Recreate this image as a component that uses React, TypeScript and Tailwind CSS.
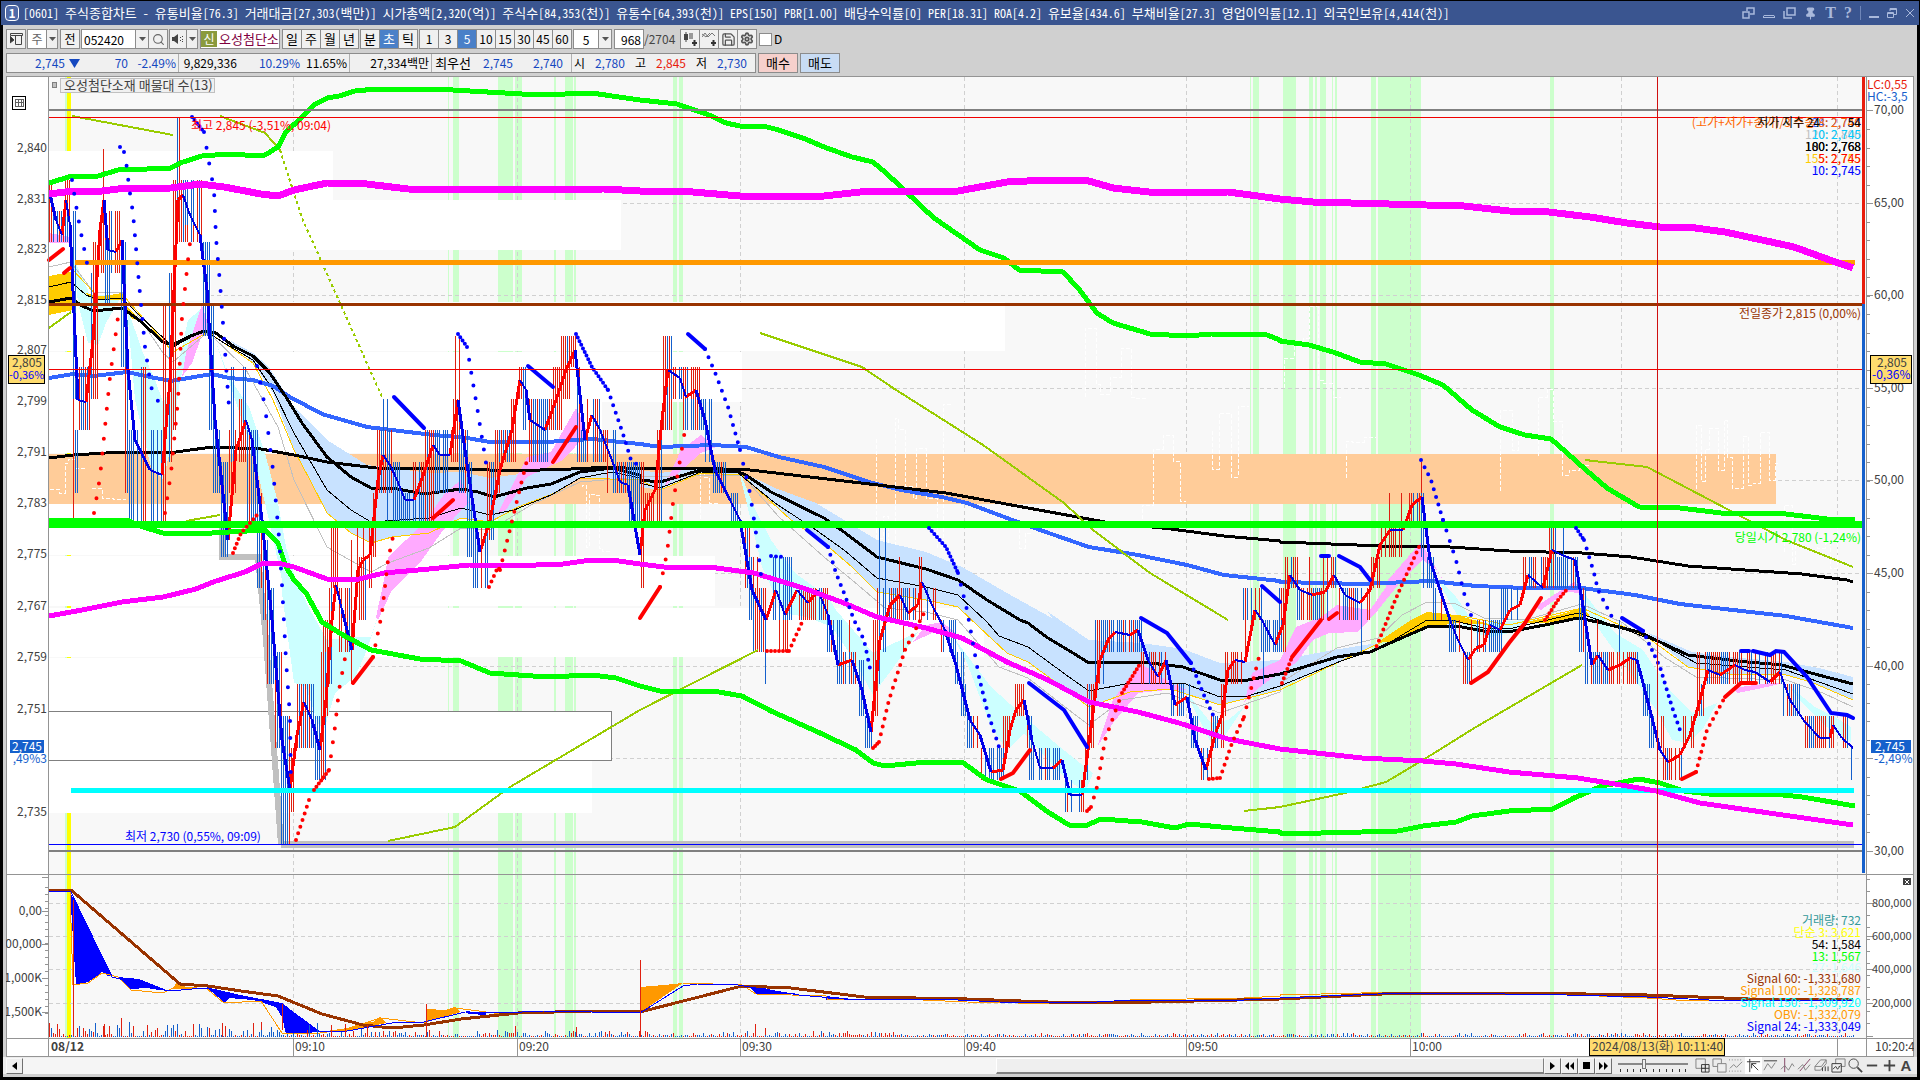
import React from 'react';
import { Search, Save, Settings, Pin } from 'lucide-react';

type Pt = [number, number];

/* Survey tiles of the chart: each letter is a tile origin in chart pixels. */
const ORIGIN: Record<string, Pt> = {
  A: [0, 0], B: [640, 0], C: [1280, 0], D: [0, 220], E: [0, 560], F: [640, 300],
  G: [640, 560], H: [1280, 220], I: [1280, 560], J: [0, 860], K: [640, 860], L: [1280, 860],
};

/* Reads "D 120 475 180 462 ..." (tile letter, then fine-grid pairs) into chart pixels. */
function pts(src: string): string {
  const out: string[] = [];
  let o: Pt = [0, 0];
  let x: number | null = null;
  for (const t of src.split(/\s+/)) {
    if (ORIGIN[t]) { o = ORIGIN[t]; continue; }
    if (x === null) x = Number(t);
    else {
      out.push(Math.round(o[0] + x / 2.45) + ',' + Math.round(o[1] + Number(t) / 3));
      x = null;
    }
  }
  return out.join(' ');
}

const BANDS: Pt[] = [
  [448, 1], [453, 6], [498, 15], [515, 7], [554, 2], [565, 8], [574, 2], [673, 4], [679, 4], [1250, 1], [1253, 6],
  [1283, 13], [1309, 4], [1315, 2], [1320, 6], [1332, 1], [1335, 2], [1371, 5], [1378, 43], [1550, 4],
];
const VGRID = [293, 517, 740, 964, 1186, 1410, 1621, 1837];
const HGRID = [203, 295, 388, 480, 573, 666, 758, 903, 936, 969, 1003];

/* Volume profile rows: top, bottom, right edge. */
const PROFILE: [number, number, number][] = [
  [151, 200, 333], [200, 250, 621], [250, 301, 211], [302, 351, 1005], [352, 402, 742], [402, 453, 602],
  [504, 555, 450], [556, 606, 715], [608, 657, 984], [658, 711, 360], [760, 813, 592],
];

const LIGHT_BLUE = [
  'D 560 360 620 400 660 440 720 560 800 660 900 735 960 745 1050 760 1130 755 1200 775 1290 760 1420 740 1568 745 F 0 510 50 520 150 505 250 515 330 565 430 610 500 660 580 720 700 755 790 800 900 880 1010 955 G 1000 155 1100 240 1230 248 1330 268 1420 308 1568 300 I 0 300 130 270 240 250 150 302 0 385 G 1568 390 1420 435 1300 388 1200 395 1100 440 1050 395 950 305 900 280 F 830 980 780 920 700 900 580 875 520 800 450 730 370 660 250 525 150 520 50 570 0 560 D 1568 780 1420 775 1360 820 1270 860 1200 905 1130 895 1050 940 960 950 910 970 860 940 800 880 760 780 720 690 670 520 620 430',
  'I 900 215 930 235 1010 275 1100 290 1240 305 1320 325 1405 350 1405 420 1300 365 1240 345 1100 343 1000 320 930 250',
];
const CYAN = [
  'D 180 110 220 225 300 225 260 310 240 375 215 370 190 250',
  'D 310 260 350 400 380 480 400 545 425 500 460 300 490 270 440 480 420 680 400 780 370 740 330 540',
  'D 525 350 560 470 610 560 650 700 680 850 700 980 725 1080 E 760 150 800 240 860 230 910 230 930 150 900 270 870 350 820 400 795 510 780 490 750 380 720 370 690 100 D 690 1080 660 900 620 700 570 520',
  'F 240 500 280 620 320 720 380 820 460 890 G 480 150 570 280 680 215 640 290 570 405 520 290 470 200 410 170 350 160 F 300 800 270 650',
  'G 770 235 860 380 950 480 1030 560 1090 620 1110 640 1090 700 1030 640 940 520 900 570 860 500 800 310',
  'G 1340 400 1400 490 1440 480 1480 440 1430 530 1400 550 1350 430',
  'I 390 60 430 110 470 180 500 190 600 180 640 170 570 215 510 235 450 200 400 90',
  'I 745 100 820 220 890 270 960 400 1010 460 1070 430 1040 500 1000 550 960 540 920 450 830 290 760 170',
  'I 1245 375 1310 440 1360 470 1400 500 1400 545 1340 500 1280 430',
];
const PINK = [
  'D 120 40 175 50 175 70 120 70',
  'D 455 400 495 255 520 345 495 345 470 430 445 470',
  'D 950 1010 1040 910 1090 820 1130 780 1150 850 1130 870 1080 940 1035 1020 E 960 90 925 180 920 170 940 60',
  'D 1220 880 1290 710 1350 695 1410 565 1440 640 1380 720 1290 770 1240 870',
  'F 60 560 100 450 150 405 185 440 150 460 110 500',
  'G 670 245 700 195 740 185 790 235 720 215',
  'G 1120 560 1160 420 1225 310 1300 370 1340 390 1290 390 1220 400 1160 490',
  'G 1480 430 1500 340 1568 300 I 40 200 100 170 140 135 220 150 260 80 H 265 1080 345 965 400 1080 I 385 30 350 0 300 60 240 150 190 215 120 220 80 240 40 310 0 335 G 1510 390',
  'I 625 140 720 65 740 80 740 100 700 95 640 150',
  'I 1110 385 1200 370 1235 370 1180 385 1120 400',
];
const GOLD = [
  'D 120 168 175 155 180 270 120 285',
  'D 205 215 240 230 300 220 310 260 350 310 320 295 300 240 230 240',
  'I 240 245 320 180 360 155 430 165 520 195 430 190 360 205 270 245',
  'I 590 190 680 165 740 145 760 165 730 178 650 190',
];

const UPPER_GREEN = 'A 120 549 177 527 240 527 290 510 360 508 420 505 440 490 495 467 560 462 600 466 650 465 680 440 700 395 740 350 770 315 800 295 830 288 870 274 920 266 950 271 1000 267 1090 267 1110 271 1320 285 1450 280 1500 287 1568 299 B 90 313 170 345 210 368 245 378 310 380 330 388 400 415 450 440 520 470 570 485 600 515 640 560 690 620 720 655 833 750 892 774 928 810 1036 816 1073 864 F 1095 0 1120 40 1160 70 1250 103 1340 108 1400 103 1535 105 1568 120 H 0 363 70 375 130 395 195 427 260 431 340 465 400 495 470 570 540 620 600 646 665 658 700 695 750 750 800 805 880 862 980 865 1080 879 1220 880 1340 898 1408 900';
const LOWER_GREEN = 'D 120 900 310 900 350 920 400 940 480 943 560 935 650 930 680 970 700 1040 720 1080 E 750 100 790 185 840 225 910 270 1030 298 1130 303 1200 338 1340 352 1450 345 1510 355 1568 378 G 50 394 180 394 250 408 320 452 440 518 530 570 570 610 600 617 700 606 790 606 850 660 930 693 1000 755 1050 795 1090 797 1130 777 1230 787 1310 805 1345 791 1450 803 1568 815 I 0 818 100 820 200 815 290 812 350 798 430 787 470 768 560 753 670 747 720 715 790 677 880 657 930 668 990 693 1050 702 1210 701 1280 710 1408 739';
const UPPER_MAGENTA = 'A 120 581 180 573 230 576 290 566 420 565 490 552 550 560 640 583 680 587 720 570 800 550 900 553 1000 566 1140 570 1480 568 1568 574 B 100 573 245 589 450 587 560 574 780 574 900 547 1000 541 1090 540 1160 563 1270 579 1440 577 1568 598 C 80 606 450 618 560 633 660 637 760 652 H 850 10 930 22 1000 22 1090 35 1180 60 1260 82 1340 117 1405 143';
const LOWER_MAGENTA = 'E 120 169 200 150 300 125 400 112 480 88 530 63 600 35 640 12 680 8 720 22 800 56 880 57 940 38 1050 27 1150 16 1250 19 1380 12 1430 3 1500 0 1568 12 G 60 22 170 22 280 40 400 85 500 130 580 170 700 205 790 235 900 305 1000 360 1100 425 1220 455 1320 490 1440 538 1568 566 I 200 595 350 602 430 612 560 637 730 653 850 678 920 693 1030 730 1250 768 1405 794';
const BLUE_MA = 'D 120 475 180 462 230 467 310 457 380 475 420 483 520 462 560 475 620 480 670 497 710 530 790 583 900 622 1060 645 1130 650 1200 665 1340 665 1450 658 1568 671 F 50 440 180 435 260 442 340 470 450 500 560 545 640 570 740 590 800 610 900 655 980 690 1100 742 1220 765 1340 795 1430 825 1568 843 I 0 65 200 73 370 62 480 77 600 84 740 84 870 105 980 132 1240 168 1405 204';
const BLACK_LONG = 'D 120 715 180 705 300 695 430 696 520 682 640 686 720 705 800 725 920 745 1150 748 1250 754 1400 748 1500 742 1568 748 F 140 505 270 509 500 543 750 580 950 625 1140 665 1300 687 1430 708 1568 723 H 0 965 250 979 380 977 560 993 740 998 860 1012 1000 1037 1280 1063 1390 1080 I 1405 65';
const BLACK_MID = 'D 120 245 175 234 200 258 230 272 300 264 340 300 400 365 425 375 460 350 500 332 530 340 570 378 620 408 660 455 700 530 740 610 800 710 860 772 910 805 960 805 1040 822 1130 808 1170 815 1210 830 1290 805 1350 793 1420 755 1500 745 1568 765 F 0 540 50 545 90 530 150 510 240 515 260 525 320 575 450 655 500 695 580 770 700 808 780 840 850 900 930 960 G 950 190 1000 235 1060 280 1100 310 1230 305 1330 322 1420 360 1490 360 1568 343 I 0 343 60 320 140 292 220 277 270 250 360 200 430 197 500 212 570 212 650 195 730 175 790 190 880 215 930 245 1000 285 1120 302 1230 315 1300 338 1405 373';
const BLACK_THIN = 'D 120 200 175 185 210 225 240 240 300 235 340 285 425 380 500 330 550 370 620 420 670 510 720 640 800 810 860 870 910 905 1050 895 1130 865 1200 885 1260 870 1350 825 1420 775 1500 755 1568 775 F 0 550 50 565 150 515 240 520 330 610 430 690 500 750 580 835 700 862 780 885 850 965 G 880 228 950 262 1050 350 1100 393 1200 368 1330 370 1420 412 1490 408 1568 378 I 150 302 250 260 360 180 420 180 500 203 570 203 730 160 830 200 930 250 1020 310 1240 330 1320 365 1405 402';
const GOLD_THIN = 'D 180 150 240 230 300 222 425 395 510 335 620 430 670 540 720 690 760 780 800 880 860 940 910 970 960 950 1050 940 1130 895 1200 905 1270 860 1360 820 1420 775 1568 780 F 50 570 150 520 250 525 370 660 450 730 520 800 580 875 700 900 780 920 830 980 G 900 280 950 305 1050 395 1100 440 1200 395 1300 388 1420 435 1568 390 I 150 302 250 245 360 165 430 165 560 195 740 145 900 230 1000 320 1100 343 1240 345 1300 365 1405 420';
const GRAY_THIN = 'D 120 140 175 125 230 220 300 215 400 400 425 425 510 335 600 445 680 620 720 780 800 980 910 1055 950 1030 1050 985 1130 925 1200 930 1300 855 1420 785 1568 770 F 250 525 340 650 450 770 520 840 600 925 G 700 155 780 180 880 320 950 355 1050 450 1100 495 1180 420 1290 400 1420 458 1568 395 I 0 370 140 265 240 235 300 165 360 127 430 132 500 175 600 180 740 133 840 190 940 290 1020 350 1240 360 1330 400 1405 442';

const OLIVE = [
  'A 177 347 425 405', 'A 540 347 650 400 685 450', 'D 120 325 175 275', 'D 455 903 540 885',
  'E 950 843 1115 800 1250 680 1568 450 G 290 270',
  'F 295 100 545 200 620 265 840 435 1040 610 1110 690 1250 820 1440 960',
  'G 1480 752 1568 742 I 160 700 260 665 350 600 480 500 740 315',
  'H 747 720 900 742 1100 870 1240 960 1405 1042',
];

/* Trend dots. The number is the gap between two dots. */
const BLUE_DOTS: [number, string][] = [
  [9, 'A 295 440 303 455'], [14, 'A 303 455 310 505 317 560 325 640 D 340 190 355 380 370 500 390 548'],
  [14, 'A 177 540 187 615 D 195 25 215 145'],
  [4, 'A 470 350 500 395'], [16, 'A 500 395 510 470 525 570 D 530 55 540 190 550 350 560 560'],
  [17, 'D 630 437 650 560 668 750 683 950 E 690 75 700 300 710 470 712 680'],
  [4, 'D 1123 343 1145 380'], [13, 'D 1145 380 1170 580 1190 730'],
  [2, 'D 965 530 1040 625'], [2, 'D 1293 437 1355 500'],
  [4, 'D 1412 343 1450 440 1490 510'], [8, 'D 1490 510 1530 650 1545 720 1568 740'],
  [2, 'F 117 102 160 148'], [9, 'F 160 148 185 225 215 320 245 450'], [14, 'F 245 450 270 580 285 700 300 850'],
  [2, 'F 410 690 460 740'], [8, 'F 460 740 480 820 500 880 525 960 G 550 240 567 340'],
  [5, 'F 320 768 350 770'],
  [4, 'F 708 685 750 740 780 820'], [12, 'F 780 820 800 930 G 830 350'], [8, 'G 830 350 850 450 880 560'],
  [2, 'G 952 368 1040 450 1095 560'],
  [2, 'G 1228 175 1290 220 1350 310'], [7, 'G 1350 310 1380 400 1405 465'],
  [2, 'G 1525 78 1568 125'], [2, 'H 100 1007 120 1007'], [2, 'H 145 1007 195 1040 220 1080'],
  [8, 'H 345 720 370 780 400 900'], [11, 'H 400 900 430 1020 I 450 100 467 165'],
  [4, 'H 725 925 745 960'], [9, 'H 745 960 770 1060 I 780 90 820 190'],
  [2, 'I 838 175 890 212'], [7, 'I 890 212 930 320 960 440 980 510'],
  [2, 'I 1130 272 1150 272'], [2, 'I 1160 272 1200 285 1215 272 1235 275 1290 350 1350 460 1390 465 1405 475'],
];
const RED_DOTS: [number, string][] = [
  [2, 'D 120 120 155 88'], [2, 'D 157 158 172 145'],
  [15, 'D 230 880 245 770 255 650 270 470 290 290'],
  [15, 'D 405 880 420 760 435 540 445 290 460 120 465 70'],
  [5, 'D 570 1000 590 940 630 885'],
  [7, 'E 725 840 760 710'], [4, 'E 770 690 805 630'], [14, 'E 805 630 820 500 830 390 845 295'],
  [2, 'E 865 370 915 290'], [12, 'E 915 290 935 160 950 0 D 965 935'],
  [2, 'D 1060 895 1110 840'], [6, 'E 1197 82 1220 20 D 1225 1050'], [10, 'D 1225 1050 1260 880 1290 720'],
  [2, 'D 1355 725 1410 620'],
  [2, 'F 0 955 50 860'], [14, 'F 50 860 65 760 80 610 110 390'],
  [4, 'G 310 272 365 272'], [6, 'G 365 272 400 180'],
  [3, 'G 570 563 585 545'], [8, 'G 585 545 610 420 650 270 695 160'],
  [2, 'G 885 657 915 640 955 570'],
  [3, 'G 1095 753 1105 740'], [10, 'G 1105 740 1120 680 1140 540 1180 400'], [4, 'G 1180 400 1225 312'],
  [4, 'G 1395 657 1420 655'], [7, 'G 1420 655 1450 550 1480 470'], [10, 'G 1480 470 1520 280'],
  [5, 'I 5 370 30 290'], [2, 'I 30 290 100 180'], [2, 'I 120 178 140 160'],
  [6, 'H 340 980 305 1080 I 280 130 235 265'],
  [2, 'I 467 370 510 335 560 250 600 190 640 115'], [4, 'I 650 180 680 120 705 85'],
  [2, 'I 985 657 1020 635'], [7, 'I 1020 635 1045 510 1090 410'], [2, 'I 1090 410 1130 370 1165 370'],
];

/* Tick bars: x from, x to, top, bottom, mix (r, b or m for both). */
const BARS: [number, number, number, number, string][] = [
  [49, 53, 180, 242, 'r'], [53, 70, 211, 242, 'm'], [65, 71, 180, 242, 'r'], [73, 74, 242, 525, 'r'], [72, 76, 211, 399, 'b'],
  [75, 79, 430, 493, 'b'], [79, 90, 367, 430, 'm'], [82, 84, 336, 430, 'b'], [90, 98, 273, 399, 'r'], [93, 96, 242, 340, 'r'],
  [100, 121, 211, 273, 'r'], [103, 104, 149, 273, 'r'], [104, 110, 240, 305, 'b'], [121, 126, 242, 367, 'b'], [124, 128, 320, 493, 'b'],
  [128, 142, 430, 525, 'b'], [140, 146, 367, 525, 'r'], [148, 163, 430, 525, 'b'], [163, 167, 305, 525, 'r'], [168, 172, 273, 462, 'm'],
  [172, 177, 180, 430, 'r'], [176, 181, 118, 242, 'r'], [181, 203, 180, 242, 'r'], [184, 196, 180, 225, 'b'], [203, 210, 242, 336, 'b'],
  [209, 214, 305, 430, 'b'], [213, 221, 430, 493, 'b'], [221, 229, 462, 557, 'b'], [229, 236, 430, 493, 'r'], [231, 234, 367, 462, 'b'],
  [235, 247, 399, 462, 'r'], [243, 246, 367, 430, 'b'], [247, 258, 430, 525, 'b'], [257, 262, 493, 588, 'm'], [262, 268, 540, 620, 'b'],
  [267, 275, 588, 684, 'b'], [274, 282, 652, 748, 'b'], [281, 290, 716, 844, 'b'], [290, 295, 748, 812, 'r'], [295, 312, 684, 748, 'm'],
  [306, 314, 684, 748, 'b'], [314, 321, 716, 780, 'b'], [321, 326, 652, 780, 'r'], [323, 328, 620, 716, 'r'], [328, 333, 588, 684, 'r'],
  [330, 338, 525, 588, 'm'], [338, 350, 588, 652, 'm'], [350, 353, 540, 684, 'r'], [354, 372, 525, 588, 'r'], [358, 366, 557, 620, 'm'],
  [372, 377, 493, 557, 'r'], [376, 392, 430, 493, 'r'], [383, 384, 399, 462, 'r'], [386, 387, 399, 525, 'b'], [392, 400, 462, 525, 'b'],
  [398, 425, 493, 525, 'b'], [410, 425, 462, 525, 'r'], [425, 434, 430, 525, 'r'], [434, 452, 430, 462, 'r'], [434, 450, 430, 493, 'b'],
  [452, 460, 399, 462, 'r'], [455, 456, 336, 399, 'r'], [458, 459, 336, 493, 'b'], [459, 468, 430, 493, 'b'], [467, 472, 462, 557, 'b'],
  [471, 488, 525, 588, 'b'], [486, 494, 462, 540, 'm'], [494, 510, 430, 462, 'm'], [494, 500, 430, 493, 'r'], [510, 517, 399, 462, 'r'],
  [516, 526, 367, 399, 'r'], [522, 526, 367, 430, 'b'], [526, 548, 399, 462, 'm'], [548, 556, 399, 430, 'r'], [553, 562, 367, 430, 'r'],
  [560, 577, 336, 367, 'r'], [562, 570, 336, 399, 'r'], [576, 581, 367, 462, 'b'], [581, 588, 430, 462, 'm'], [587, 600, 399, 462, 'm'],
  [599, 609, 430, 462, 'm'], [607, 617, 430, 493, 'b'], [617, 630, 462, 493, 'm'], [628, 640, 462, 525, 'b'], [640, 644, 462, 588, 'r'],
  [644, 657, 493, 525, 'r'], [657, 662, 430, 525, 'r'], [662, 673, 336, 430, 'r'], [670, 673, 336, 399, 'b'], [673, 700, 367, 399, 'm'],
  [683, 699, 399, 430, 'm'], [698, 706, 399, 430, 'b'], [704, 713, 399, 462, 'b'], [712, 730, 462, 493, 'b'], [730, 745, 493, 525, 'b'],
  [745, 750, 525, 588, 'b'], [749, 755, 557, 620, 'b'], [752, 770, 588, 652, 'm'], [768, 796, 557, 620, 'b'], [778, 788, 588, 652, 'r'],
  [788, 828, 588, 620, 'm'], [765, 766, 620, 684, 'b'], [757, 759, 557, 652, 'r'], [826, 834, 620, 652, 'b'], [832, 842, 620, 684, 'b'],
  [842, 858, 652, 684, 'm'], [849, 851, 620, 684, 'r'], [858, 865, 660, 716, 'b'], [865, 873, 716, 748, 'b'], [872, 878, 620, 716, 'r'],
  [877, 887, 588, 652, 'm'], [878, 879, 525, 684, 'b'], [884, 885, 525, 652, 'b'], [888, 916, 588, 620, 'm'], [898, 900, 557, 620, 'r'],
  [903, 905, 588, 652, 'b'], [919, 923, 557, 620, 'r'], [925, 936, 588, 620, 'm'], [939, 956, 620, 652, 'm'], [955, 964, 652, 684, 'b'],
  [960, 967, 684, 716, 'b'], [966, 980, 716, 748, 'm'], [981, 1004, 748, 780, 'b'], [1003, 1013, 716, 748, 'r'], [1012, 1027, 684, 716, 'r'],
  [1026, 1033, 716, 748, 'b'], [1029, 1064, 748, 780, 'b'], [1063, 1084, 780, 812, 'b'], [1070, 1080, 780, 812, 'r'], [1084, 1088, 748, 780, 'r'],
  [1087, 1094, 684, 748, 'r'], [1094, 1100, 620, 684, 'r'], [1100, 1142, 620, 652, 'm'], [1102, 1104, 620, 684, 'b'], [1141, 1167, 652, 684, 'm'],
  [1168, 1190, 684, 716, 'b'], [1190, 1198, 716, 748, 'b'], [1199, 1212, 748, 780, 'm'], [1210, 1224, 716, 748, 'm'], [1220, 1226, 684, 716, 'r'],
  [1225, 1243, 652, 684, 'r'], [1243, 1262, 588, 620, 'b'], [1245, 1247, 588, 652, 'r'], [1260, 1283, 620, 652, 'b'], [1263, 1264, 620, 684, 'b'],
  [1279, 1286, 588, 652, 'r'], [1284, 1298, 557, 588, 'r'], [1297, 1328, 588, 620, 'm'], [1322, 1337, 557, 588, 'm'], [1338, 1370, 588, 620, 'm'],
  [1361, 1362, 588, 652, 'r'], [1309, 1310, 557, 588, 'r'], [1371, 1380, 557, 588, 'r'], [1380, 1402, 528, 557, 'r'], [1389, 1390, 493, 525, 'r'],
  [1401, 1420, 493, 525, 'r'], [1420, 1421, 462, 525, 'r'], [1421, 1424, 493, 557, 'b'], [1423, 1434, 557, 588, 'b'], [1432, 1442, 588, 620, 'b'],
  [1449, 1461, 620, 652, 'b'], [1462, 1470, 652, 684, 'b'], [1470, 1471, 620, 684, 'r'], [1476, 1502, 620, 652, 'm'], [1488, 1490, 588, 652, 'b'],
  [1501, 1518, 588, 620, 'b'], [1522, 1544, 557, 588, 'm'], [1544, 1550, 557, 588, 'r'], [1548, 1556, 528, 588, 'm'], [1562, 1564, 528, 588, 'r'],
  [1556, 1578, 557, 588, 'b'], [1579, 1586, 588, 652, 'b'], [1585, 1638, 652, 684, 'm'], [1596, 1597, 620, 652, 'r'], [1619, 1620, 620, 652, 'r'],
  [1640, 1650, 684, 716, 'b'], [1649, 1665, 716, 748, 'b'], [1662, 1682, 748, 780, 'm'], [1682, 1694, 716, 748, 'r'], [1694, 1704, 684, 716, 'r'],
  [1697, 1700, 652, 716, 'r'], [1705, 1782, 652, 684, 'm'], [1783, 1800, 684, 716, 'b'], [1803, 1834, 716, 748, 'm'], [1843, 1848, 716, 748, 'b'],
  [1850, 1851, 748, 780, 'b'],
];

const PRICE: number[] = [
  49,190,56,220,62,235,66,200,70,225,78,400,86,402,93,340,100,230,104,200,108,250,116,252,122,240,128,370,135,440,150,470,162,475,170,380,
  178,200,183,195,190,215,200,235,207,290,215,420,228,540,236,450,246,420,252,440,262,520,272,620,282,740,290,790,297,735,304,702,312,720,
  320,750,326,700,332,620,336,585,342,610,352,650,358,570,363,560,370,555,378,480,383,455,390,465,397,480,405,500,414,500,425,470,433,445,
  440,455,450,455,458,400,465,450,480,552,490,520,500,470,512,430,520,380,526,390,530,420,545,430,556,400,566,370,575,350,585,440,592,415,
  600,430,610,455,620,482,628,485,640,555,645,510,655,490,662,420,668,370,680,378,686,397,696,390,705,420,715,470,730,500,740,520,752,590,
  766,620,776,590,785,615,797,590,808,603,818,590,828,615,838,665,852,660,862,690,871,732,880,640,890,605,900,595,908,613,918,605,922,582,
  932,605,945,630,956,665,970,720,980,735,991,772,1003,770,1010,730,1016,710,1024,700,1032,740,1040,768,1053,768,1062,760,1070,795,1082,795,
  1090,735,1100,660,1108,640,1115,632,1130,635,1138,630,1148,660,1158,677,1166,660,1175,705,1187,697,1195,740,1206,770,1215,735,1222,715,
  1228,670,1235,660,1245,662,1255,610,1262,620,1275,645,1283,625,1290,575,1300,590,1312,595,1325,592,1334,575,1345,595,1360,603,1370,590,
  1380,545,1390,530,1403,530,1412,505,1422,497,1430,560,1440,590,1450,620,1458,640,1468,660,1476,648,1484,645,1490,625,1500,630,1510,610,
  1520,605,1528,575,1543,588,1552,550,1562,555,1575,560,1582,600,1592,665,1598,655,1608,670,1620,665,1630,658,1637,660,1650,710,1660,750,
  1668,762,1680,755,1690,735,1700,700,1708,670,1720,675,1735,665,1745,670,1755,672,1770,682,1780,672,1790,700,1805,722,1820,738,1830,738,
  1833,725,1842,738,1853,748,
];

const noise = (n: number) => {
  const v = Math.sin(n * 127.1 + 11.7) * 43758.5453;
  return v - Math.floor(v);
};

function buildBars() {
  let red = '';
  let blue = '';
  BARS.forEach(([x0, x1, y0, y1, mix], i) => {
    for (let x = x0 | 1; x < Math.max(x1, (x0 | 1) + 1); x += 2) {
      const r = noise(x + i * 3);
      if (x1 - x0 > 8 && noise(x * 1.7) < 0.2) continue;
      const isRed = mix === 'r' ? r > 0.1 : mix === 'b' ? r > 0.88 : r > 0.5;
      const seg = `M${x} ${y0}V${y1}`;
      if (isRed) red += seg; else blue += seg;
    }
  });
  return { red, blue };
}

function buildPrice() {
  let up = '';
  let down = '';
  let fall = '';
  for (let i = 0; i + 3 < PRICE.length; i += 2) {
    const seg = `M${PRICE[i]} ${PRICE[i + 1]}L${PRICE[i + 2]} ${PRICE[i + 3]}`;
    const dy = PRICE[i + 3] - PRICE[i + 1];
    if (dy < 0) up += seg; else if (dy > 28) fall += seg; else down += seg;
  }
  return { up, down, fall };
}

function buildVolume() {
  let red = 'M73 900V1037M426 1004V1037M640 960V1037M755 1024V1037M765 1028V1037M282 1004V1030M121 1018V1037M104 1024V1037M222 1023V1037M261 1022V1037M515 1026V1037M576 1027V1037';
  let blue = '';
  for (let x = 49; x < 1854; x += 2) {
    const peak = x < 380 ? 14 : x < 660 ? 6 : x < 900 ? 5 : 3;
    const h = 1 + Math.round(peak * Math.pow(noise(x), 3));
    const seg = `M${x} ${1037 - h}V1037`;
    if (noise(x * 2.3) > 0.55) red += seg; else blue += seg;
  }
  return { red, blue };
}

/* Faint dashed step traces that cross the profile row. */
function buildTraces() {
  let d = '';
  const spans: [number, number, number, number][] = [
    [50, 78, 456, 503], [92, 122, 456, 503], [330, 372, 445, 503], [582, 604, 480, 560], [700, 712, 470, 520], [876, 946, 400, 560],
    [1010, 1026, 460, 560], [1085, 1140, 320, 410], [1142, 1182, 430, 520], [1212, 1240, 400, 500], [1284, 1336, 300, 400],
    [1346, 1366, 420, 500], [1500, 1530, 400, 530], [1538, 1580, 360, 480], [1696, 1776, 420, 490], [1784, 1840, 500, 570],
  ];
  spans.forEach(([x0, x1, y0, y1], i) => {
    let y = y0 + (y1 - y0) * noise(i);
    d += `M${x0} ${Math.round(y)}`;
    let x = x0;
    let k = 0;
    while (x < x1) {
      const step = 3 + Math.round(noise(x + k) * 9);
      y = y0 + (y1 - y0) * noise(x + i);
      x += step;
      k += 1;
      d += `V${Math.round(y)}H${x}`;
    }
  });
  return d;
}

const bars = buildBars();
const price = buildPrice();
const volume = buildVolume();
const traces = buildTraces();

function Line({ d, c, w }: { d: string; c: string; w: number }) {
  return <polyline points={pts(d)} fill="none" stroke={c} strokeWidth={w} strokeLinejoin="round" />;
}
function Areas({ list, c }: { list: string[]; c: string }) {
  return <g fill={c}>{list.map((d) => <polygon key={d} points={pts(d)} />)}</g>;
}
function Dots({ list, c }: { list: [number, string][]; c: string }) {
  return (
    <g fill="none" stroke={c} strokeWidth={4} strokeLinecap="round">
      {list.map(([gap, d]) => (
        <polyline key={d} points={pts(d)} strokeDasharray={gap > 2 ? `0 ${gap}` : undefined} />
      ))}
    </g>
  );
}
function T({ x, y, c = '#404040', end, bold, size = 12, children }: { x: number; y: number; c?: string; end?: boolean; bold?: boolean; size?: number; children: React.ReactNode }) {
  return (
    <text x={x} y={y} fill={c} fontSize={size} textAnchor={end ? 'end' : 'start'} fontWeight={bold ? 700 : 400}>{children}</text>
  );
}

const LEFT_PRICES: [string, number][] = [
  ['2,840', 152], ['2,831', 203], ['2,823', 253], ['2,815', 304], ['2,807', 354], ['2,799', 405], ['2,791', 456],
  ['2,783', 507], ['2,775', 558], ['2,767', 610], ['2,759', 661], ['2,751', 713], ['2,735', 816],
];
const RIGHT_RATES: [string, number][] = [
  ['70,00', 110], ['65,00', 203], ['60,00', 295], ['55,00', 388], ['50,00', 480], ['45,00', 573], ['40,00', 666], ['30,00', 851],
];
const TIMES: [string, number][] = [['09:10', 293], ['09:20', 517], ['09:30', 740], ['09:40', 964], ['09:50', 1186], ['10:00', 1410]];

function Chart() {
  return (
    <svg
      className="block h-full w-full font-['Noto_Sans_CJK_KR',sans-serif]"
      viewBox="6 76 1908 981"
      preserveAspectRatio="none"
      role="img"
      aria-label="오성첨단소재 5초 차트"
    >
      <g shapeRendering="crispEdges">
        <rect x="6" y="76" width="1908" height="981" fill="#fff" />
        <rect x="49" y="77" width="1817" height="961" fill="#f8f8f8" />
        <g fill="#ccffcc">
          {BANDS.map(([x, w]) => <rect key={x} x={x} y="77" width={w} height="961" />)}
          <rect x="65" y="77" width="2" height="961" />
        </g>
        <rect x="67" y="77" width="4" height="961" fill="#ffff00" />
        <g stroke="#d0d0d0" strokeDasharray="4 3">
          {VGRID.map((x) => <line key={x} x1={x + 0.5} x2={x + 0.5} y1="77" y2="1038" />)}
          {HGRID.map((y) => <line key={y} x1="49" x2="1862" y1={y + 0.5} y2={y + 0.5} />)}
        </g>
        <g fill="#fff">
          {PROFILE.map(([t, b, r]) => <rect key={t} x="49" y={t} width={r - 49} height={b - t} />)}
        </g>
        <rect x="49" y="454" width="1727" height="50" fill="#ffcc99" />
        <rect x="48.5" y="711.5" width="563" height="49" fill="#fff" stroke="#808080" />
        <path d={traces} fill="none" stroke="#fff" strokeDasharray="4 2" />

        <Areas list={LIGHT_BLUE} c="#c8e2ff" />
        <Areas list={CYAN} c="#ccffff" />
        <Areas list={PINK} c="#ffaaff" />
        <Areas list={GOLD} c="#ffcc00" />

        <Line d={GRAY_THIN} c="#c0c0c0" w={1} />
        <Line d={GOLD_THIN} c="#ffcc00" w={1} />
        <Line d={BLACK_THIN} c="#000" w={1} />
        <polyline points="222,527 222,557 258,557 266,640 281,844" fill="none" stroke="#c0c0c0" strokeWidth="6" />
        <rect x="281" y="841" width="1573" height="7" fill="#c0c0c0" />

        <Line d={BLUE_MA} c="#3366ff" w={4} />
        <Line d={BLACK_LONG} c="#000" w={3} />
        <Line d={BLACK_MID} c="#000" w={3} />

        <g fill="none" strokeWidth="1" transform="translate(0.5 0)">
          <path d={bars.red} stroke="#e02010" />
          <path d={bars.blue} stroke="#1560cc" />
        </g>
        <path d={price.up} fill="none" stroke="#f00" strokeWidth="3" />
        <path d={price.down} fill="none" stroke="#0000e0" strokeWidth="2" />
        <path d={price.fall} fill="none" stroke="#0000e8" strokeWidth="3" />

        <g fill="none" stroke="#99cc00" strokeWidth="2">
          {OLIVE.map((d) => <polyline key={d} points={pts(d)} />)}
          <polyline points={pts('A 685 450 740 655 D 935 530')} strokeDasharray="3 3" />
        </g>

        <Line d={UPPER_GREEN} c="#00ff00" w={5} />
        <Line d={LOWER_GREEN} c="#00ff00" w={5} />
        <rect x="75" y="260" width="1780" height="5" fill="#ff9900" />
        <Line d={UPPER_MAGENTA} c="#ff00ff" w={7} />
        <rect x="71" y="788" width="1783" height="5" fill="#00ffff" />
        <Line d={LOWER_MAGENTA} c="#ff00ff" w={5} />
        <rect x="49" y="303" width="1813" height="3" fill="#993300" />
        <rect x="49" y="521" width="1813" height="7" fill="#00ff00" />
      </g>

      <Dots list={BLUE_DOTS} c="#0000ff" />
      <Dots list={RED_DOTS} c="#ff0000" />

      <g shapeRendering="crispEdges">
        <rect x="49" y="109" width="1813" height="2" fill="#808080" />
        <rect x="49" y="850" width="1813" height="2" fill="#808080" />
        <rect x="49" y="117" width="1813" height="1" fill="#f00000" />
        <rect x="49" y="844" width="1813" height="1" fill="#0000ff" />

        <g fill="#0000ff">
          <polygon points={pts('J 172 95 185 130 275 345 265 348 250 335 235 352 215 365 185 374')} />
          <polygon points={pts('J 290 352 340 358 415 392 390 390 360 385 320 388')} />
          <polygon points={pts('J 505 382 600 408 690 430 785 515 700 523 690 470 675 440 620 420 560 415 550 430 535 410')} />
          <polygon points={pts('K 265 376 350 395 390 403 285 403')} />
          <polygon points={pts('K 455 408 520 416 455 420')} />
          <polygon points={pts('J 1140 452 1190 458 1190 465 1150 462')} />
        </g>
        <g fill="#ff9900">
          <polygon points={pts('J 422 388 435 362 455 380 510 384')} />
          <polygon points={pts('J 785 517 850 505 890 490 915 487 930 472 945 488 860 512')} />
          <polygon points={pts('J 1043 447 1090 450 1115 440 1130 457 1045 486')} />
          <polygon points={pts('J 1568 400 K 0 380 60 374 105 370 10 450 J 1568 460')} />
        </g>
        <Line d="J 120 90 172 92 180 374 215 368 250 338 290 350 320 390 400 400 420 388 505 384 550 430 640 422 690 520 785 520 850 508 930 475 1040 488 1115 445 1230 463 1330 452 1568 460" c="#ff9900" w={1} />
        <Line d="K 105 370 250 374 285 403 455 409 460 421 640 417 800 426 1050 432 1200 420 1480 413 1568 408 L 0 405 300 395 600 400 900 415 970 421 1405 421" c="#ff9900" w={1} />
        <Line d="J 120 90 175 90 440 372 510 377 590 392 680 408 790 462 890 495 960 505 1040 495 1130 478 1270 460 1450 453 1568 457 K 250 378 370 385 550 410 800 418 1000 427 1150 428 1568 418 L 250 402 600 400 900 405 1150 418 1405 421" c="#993300" w={3} />
        <Line d="J 120 92 175 95 275 350 415 392 500 384 690 432 785 517 850 512 960 490 1040 486 1140 456 1230 459 1330 453 1568 458 K 105 377 140 373 240 374 390 405 500 417 780 420 880 427 1080 428 1200 421 1480 420 1568 413 L 300 398 400 398 700 405 900 410 1050 421 1405 421" c="#0000ff" w={1} />
        <g fill="none" transform="translate(0.5 0)">
          <path d={volume.red} stroke="#e02010" />
          <path d={volume.blue} stroke="#1560cc" />
        </g>

        <rect x="1862" y="77" width="3" height="227" fill="#e81c0c" />
        <rect x="1862" y="304" width="3" height="569" fill="#1560cc" />
        <rect x="49" y="369" width="1813" height="1" fill="#f00000" />
        <rect x="1657" y="77" width="1" height="961" fill="#d01010" />

        <g fill="#949494">
          <rect x="6" y="76" width="1908" height="1" />
          <rect x="6" y="76" width="1" height="981" />
          <rect x="1913" y="76" width="1" height="981" />
          <rect x="48" y="77" width="1" height="979" />
          <rect x="1866" y="77" width="1" height="979" />
          <rect x="6" y="874" width="1908" height="1" />
          <rect x="6" y="1038" width="1908" height="1" />
          <rect x="6" y="1056" width="1908" height="1" />
          {TIMES.map(([t, x]) => <rect key={t} x={x} y="1038" width="1" height="18" />)}
          <rect x="1837" y="1038" width="1" height="18" />
          {RIGHT_RATES.map(([t, y]) => <rect key={t} x="1867" y={y} width="6" height="1" />)}
          <rect x="1867" y="758" width="6" height="1" />
          {Array.from({ length: 39 }, (_, i) => <rect key={i} x="1867" y={129 + Math.round(i * 18.5)} width="3" height="1" />)}
          {[903, 936, 969, 1003, 1036].map((y) => <rect key={y} x="1867" y={y} width="6" height="1" />)}
          {Array.from({ length: 13 }, (_, i) => <rect key={i} x="1867" y={879 + i * 12} width="3" height="1" />)}
          {[877, 911, 944, 978, 1012].map((y) => <rect key={y} x="42" y={y} width="6" height="1" />)}
          {Array.from({ length: 19 }, (_, i) => <rect key={i} x="45" y={887 + i * 7} width="3" height="1" />)}
        </g>
      </g>

      {/* Left scale */}
      {LEFT_PRICES.map(([t, y]) => <T key={t} x={47} y={y} end>{t}</T>)}
      <T x={42} y={915} end>0,00</T>
      <T x={42} y={948} end>00,000</T>
      <T x={42} y={982} end>1,000K</T>
      <T x={42} y={1016} end>1,500K</T>
      <g shapeRendering="crispEdges">
        <rect x="8.5" y="355.5" width="36" height="28" fill="#ffdc6e" stroke="#000" />
        <rect x="10" y="740" width="34" height="13" fill="#1560cc" />
        <rect x="12.5" y="96.5" width="13" height="13" fill="#fff" stroke="#000" />
        <path d="M15 99.5H24M15 102.5H24M15 106.5H24M15.5 99V107M18.5 99V107M21.5 99V107M23.5 99V107" stroke="#606060" fill="none" />
      </g>
      <T x={12} y={367}>2,805</T>
      <T x={9} y={379} size={11} c="#0000ff">-0,36%</T>
      <T x={12} y={751} c="#fff">2,745</T>
      <T x={47} y={763} end c="#1560cc">,49%3</T>

      {/* Right scale */}
      {RIGHT_RATES.map(([t, y]) => <T key={t} x={1874} y={y + 4}>{t}</T>)}
      {([['800,000', 903], ['600,000', 936], ['400,000', 969], ['200,000', 1003]] as [string, number][]).map(([t, y]) => (
        <T key={t} x={1872} y={y + 4} size={11}>{t}</T>
      ))}
      <T x={1867} y={89} c="#e81c0c">LC:0,55</T>
      <T x={1867} y={101} c="#1560cc">HC:-3,5</T>
      <g shapeRendering="crispEdges">
        <rect x="1870.5" y="355.5" width="41" height="28" fill="#ffdc6e" stroke="#000" />
        <rect x="1871" y="740" width="40" height="13" fill="#1560cc" />
        <rect x="1903" y="878" width="8" height="7" fill="#404040" />
        <path d="M1905 880L1909 884M1909 880L1905 884" stroke="#fff" />
      </g>
      <T x={1877} y={367}>2,805</T>
      <T x={1872} y={379} c="#0000ff">-0,36%</T>
      <T x={1875} y={751} c="#fff">2,745</T>
      <T x={1874} y={763} c="#1560cc">-2,49%</T>

      {/* Time scale */}
      <T x={51} y={1051} bold>08/12</T>
      {TIMES.map(([t, x]) => <T key={t} x={x + 2} y={1051}>{t}</T>)}
      <T x={1875} y={1051}>10:20:4</T>
      <rect x="1589.5" y="1038.5" width="135" height="17" fill="#ffdc6e" stroke="#000" shapeRendering="crispEdges" />
      <T x={1592} y={1051}>2024/08/13(화) 10:11:40</T>

      {/* Plot labels */}
      <g shapeRendering="crispEdges">
        <rect x="52.5" y="82.5" width="4" height="5" fill="#c0c0c0" stroke="#808080" />
        <rect x="60.5" y="78.5" width="154" height="14" fill="#f0f0f0" stroke="#c0c0c0" />
      </g>
      <T x={64} y={90} size={13}>오성첨단소재 매물대 수(13)</T>
      <T x={191} y={130} c="#ff0000">최고 2,845 (-3,51%, 09:04)</T>
      <T x={125} y={841} c="#0000ff">최저 2,730 (0,55%, 09:09)</T>
      <T x={1861} y={318} end c="#993300">전일종가 2,815 (0,00%)</T>
      <T x={1861} y={542} end c="#00ff00">당일시가 2,780 (-1,24%)</T>
      <T x={1861} y={127} end c="#3366ff">24: 2,754</T>
      <T x={1861} y={127} end c="#ff6600">(고가+저가+종가)/3 추종 8: 2,746</T>
      <T x={1820} y={127} end c="#000">저가 지수 24</T>
      <T x={1861} y={127} end c="#000">54</T>
      <T x={1861} y={139} end c="#c0c0c0">120: 2,800</T>
      <T x={1861} y={139} end c="#00ccff">10: 2,745</T>
      <T x={1861} y={151} end c="#000">180: 2,768</T>
      <T x={1861} y={151} end c="#000">100: 2,768</T>
      <T x={1861} y={163} end c="#ffcc00">155: 2,755</T>
      <T x={1861} y={163} end c="#ff0000">5: 2,745</T>
      <T x={1861} y={175} end c="#c8e2ff">30: 2,745</T>
      <T x={1861} y={175} end c="#0000ff">10: 2,745</T>
      <T x={1861} y={925} end c="#339999">거래량: 732</T>
      <T x={1861} y={937} end c="#ffff00">단순 3: 3,621</T>
      <T x={1861} y={949} end c="#000">54: 1,584</T>
      <T x={1861} y={961} end c="#00ff00">13: 1,567</T>
      <T x={1861} y={972} end c="#ccffff">27: 1,646</T>
      <T x={1861} y={983} end c="#993300">Signal 60: -1,331,680</T>
      <T x={1861} y={995} end c="#ff9900">Signal 100: -1,328,787</T>
      <T x={1861} y={1007} end c="#00ffff">Signal 150: -1,309,920</T>
      <T x={1861} y={1019} end c="#ff9900">OBV: -1,332,079</T>
      <T x={1861} y={1031} end c="#0000ff">Signal 24: -1,333,049</T>
    </svg>
  );
}

const BTN = 'flex h-5 items-center justify-center border border-[#8c8c8c] bg-[#f0f0f0] text-black';

function Seg({ items, active }: { items: string[]; active?: string }) {
  return (
    <div className="ml-0.5 flex">
      {items.map((t) => (
        <button
          key={t}
          type="button"
          className={
            t === active
              ? 'flex h-5 w-5 items-center justify-center border border-[#8c8c8c] bg-[#4a80c8] text-white -mr-px'
              : 'flex h-5 w-5 items-center justify-center border border-[#8c8c8c] bg-[#f0f0f0] -mr-px'
          }
        >
          {t}
        </button>
      ))}
    </div>
  );
}

function Down({ label, slim }: { label: string; slim?: boolean }) {
  return (
    <button
      type="button"
      aria-label={label}
      className={
        slim
          ? 'flex h-5 w-3 items-center justify-center border border-[#8c8c8c] bg-[#f0f0f0] -ml-px'
          : 'flex h-5 w-3.5 items-center justify-center border border-[#8c8c8c] bg-[#f0f0f0] -ml-px'
      }
    >
      <svg width="7" height="4" viewBox="0 0 7 4"><path d="M0 0H7L3.5 4Z" fill="#555" /></svg>
    </button>
  );
}

const TITLE =
  '[0601] 주식종합차트 - 유통비율[76.3] 거래대금[27,303(백만)] 시가총액[2,320(억)] 주식수[84,353(천)] 유통수[64,393(천)] EPS[150] PBR[1.00] 배당수익률[0] PER[18.31] ROA[4.2] 유보율[434.6] 부채비율[27.3] 영업이익률[12.1] 외국인보유[4,414(천)]';

function TitleBar() {
  return (
    <header className="mx-px flex h-6 shrink-0 items-center bg-[#3a5590] pl-1 pr-1 text-white">
      <span className="flex h-4 w-3.5 items-center justify-center rounded-sm border border-white bg-[#4f6aa8] text-xs font-bold">1</span>
      <h1 className="ml-1 flex-1 truncate whitespace-pre font-['Noto_Sans_Mono_CJK_KR','Noto_Sans_CJK_KR',sans-serif] text-[12px]">
        {TITLE.split(/([가-힣]+)/).map((part, i) => (
          <span key={i} className={i % 2 ? 'text-[13px]' : 'text-[12px]'}>{part}</span>
        ))}
      </h1>
      <div className="flex items-center gap-2 text-[#a9b9dc]">
        <button type="button" aria-label="창 분리"><svg width="13" height="12" fill="none" stroke="currentColor" strokeWidth="1.5"><path d="M1 5H7V11H1ZM5 4V1H12V7H8" /></svg></button>
        <button type="button" aria-label="접기"><svg width="12" height="12" fill="none" stroke="currentColor"><path d="M1 8.500H11L12 10.500H0Z" /></svg></button>
        <button type="button" aria-label="복제"><svg width="13" height="12" fill="none" stroke="currentColor" strokeWidth="1.5"><path d="M4 1H12V8H4ZM1 4V11H9" /></svg></button>
        <button type="button" aria-label="고정"><Pin size={13} fill="currentColor" /></button>
        <button type="button" aria-label="글꼴" className="font-['Liberation_Serif'] text-[16px] font-bold leading-4">T</button>
        <button type="button" aria-label="도움말" className="font-['Liberation_Serif'] text-[16px] font-bold leading-4">?</button>
        <span className="h-3.5 w-px bg-[#6f86b8]" />
        <button type="button" aria-label="최소화"><svg width="10" height="12"><path d="M0 9H10V11H0Z" fill="currentColor" /></svg></button>
        <button type="button" aria-label="이전 크기"><svg width="10" height="12" fill="none" stroke="currentColor"><path d="M0.500 5.500H6.500V10.500H0.500ZM0 6.500H7M3 4V1.500H9.500V7.500H7M3 2.500H9" /></svg></button>
        <button type="button" aria-label="닫기"><svg width="10" height="12" fill="none" stroke="currentColor"><path d="M1 2L9 10M9 2L1 10" /></svg></button>
      </div>
    </header>
  );
}

function Toolbar() {
  return (
    <div className="flex h-7 shrink-0 items-center pl-[3px] text-xs">
      <button type="button" aria-label="목록" className={BTN + ' w-5'}>
        <svg width="13" height="13" fill="none" stroke="#444"><path d="M0.500 0.500H12.500V2.500H0.500ZM5.500 2.500V11.500H11.500V2.500" /><path d="M0 3V10L4 7Z" fill="#333" /></svg>
      </button>
      <div className="ml-px flex">
        <span className="flex h-5 w-5 items-center justify-center border border-[#8c8c8c] bg-white text-[#666]">주</span>
        <Down label="주기" slim />
      </div>
      <button type="button" className={BTN + ' ml-0.5 w-5'}>전</button>
      <div className="ml-px flex">
        <input aria-label="종목코드" defaultValue="052420" className="h-5 w-[55px] border border-[#8c8c8c] bg-white px-0.5" />
        <Down label="종목 목록" />
        <button type="button" aria-label="종목 찾기" className={BTN + ' -ml-px w-5'}><Search size={13} color="#666" /></button>
      </div>
      <div className="ml-px flex">
        <button type="button" aria-label="소리" className={BTN + ' w-[18px]'}>
          <svg width="13" height="10" fill="#444"><path d="M0 3H2L6 0V10L2 7H0ZM8 3h1v1h-1zM8 6h1v1h-1zM10 2h1v1h-1zM10 5h1v1h-1zM10 7h1v1h-1z" /></svg>
        </button>
        <Down label="소리 목록" slim />
      </div>
      <div className="ml-0.5 flex h-5 w-20 items-center overflow-hidden whitespace-nowrap border border-[#8c8c8c] bg-white text-[#800040]">
        <span className="mr-0.5 flex h-4 w-4 shrink-0 items-center justify-center bg-[#8a9a3c] text-white">신</span>
        <span className="text-[13px]">오성첨단소</span>
      </div>
      <div className="flex text-[13px]">
        <Seg items={['일', '주', '월', '년']} />
        <Seg items={['분', '초', '틱']} active="초" />
      </div>
      <Seg items={['1', '3', '5', '10', '15', '30', '45', '60']} active="5" />
      <div className="ml-0.5 flex">
        <input aria-label="주기 값" defaultValue="5" className="h-5 w-[26px] border border-[#8c8c8c] bg-white text-center" />
        <Down label="주기 값 목록" />
      </div>
      <input aria-label="조회 개수" defaultValue="968" className="ml-0.5 h-5 w-[30px] border border-[#8c8c8c] bg-white pr-0.5 text-right" />
      <span className="w-9 text-[#444]">/2704</span>
      <div className="flex">
        <button type="button" aria-label="차트 추가" className={BTN + ' w-5'}>
          <svg width="15" height="14"><path d="M1 2H5V8H1ZM2.500 0h1v10h-1z" fill="#444" /><path d="M6 1H10V7H6Z" fill="#999" /><path d="M9 11H14M11.500 8V14" stroke="#333" strokeWidth="2" /></svg>
        </button>
        <button type="button" aria-label="지표 추가" className={BTN + ' -ml-px w-5'}>
          <svg width="15" height="14" fill="none"><path d="M0 5L3 1L6 5L10 1L13 4M0 2L4 5L8 1" stroke="#777" /><path d="M9 11H14M11.500 8V14" stroke="#333" strokeWidth="2" /></svg>
        </button>
        <button type="button" aria-label="저장" className={BTN + ' -ml-px w-5'}><Save size={15} color="#555" /></button>
        <button type="button" aria-label="설정" className={BTN + ' -ml-px w-5'}><Settings size={14} color="#555" strokeWidth={3} /></button>
      </div>
      <label className="ml-0.5 flex items-center gap-0.5">
        <input type="checkbox" className="size-[13px] appearance-none border border-[#8c8c8c] bg-white" />D
      </label>
    </div>
  );
}

function QuoteBar() {
  const blue = 'text-[#1548c0]';
  return (
    <div className="flex h-[23px] shrink-0 items-start gap-0.5 pl-[3px] text-xs">
      <dl className="flex h-5 w-[750px] shrink-0 items-center border border-[#8c8c8c] bg-[#f0f0f0] whitespace-nowrap [&>div]:flex [&>div]:h-full [&>div]:shrink-0 [&>div]:items-center [&>div]:justify-end">
        <div className="w-[172px] border-r border-[#b0b0b0] pr-0.5">
          <dd className={blue}>2,745</dd>
          <svg className="ml-1" width="11" height="9"><path d="M0 0H11L5.500 9Z" fill="#1548c0" /></svg>
          <dd className={'w-12 text-right ' + blue}>70</dd>
          <dd className={'w-12 text-right ' + blue}>-2.49%</dd>
        </div>
        <div className="w-[171px] gap-1.5 border-r border-[#b0b0b0] pr-0.5">
          <dd className="mr-4">9,829,336</dd>
          <dd className={blue}>10.29%</dd>
          <dd>11.65%</dd>
        </div>
        <div className="w-[82px] border-r border-[#b0b0b0] pr-0.5"><dd>27,334백만</dd></div>
        <div className="w-[140px] gap-5 border-r border-[#b0b0b0] pr-2">
          <dt className="-mr-2 text-[13px]">최우선</dt><dd className={blue}>2,745</dd><dd className={blue}>2,740</dd>
        </div>
        <div className="w-[183px] gap-2.5 pr-2">
          <dt>시</dt><dd className={blue}>2,780</dd>
          <dt>고</dt><dd className="text-[#e81c0c]">2,845</dd>
          <dt>저</dt><dd className={blue}>2,730</dd>
        </div>
      </dl>
      <button type="button" className="h-5 w-10 border border-[#8c8c8c] bg-[#f6d0cc] text-[13px]">매수</button>
      <button type="button" className="h-5 w-10 border border-[#8c8c8c] bg-[#c8dcf4] text-[13px]">매도</button>
    </div>
  );
}

const RAISED = 'flex h-4 w-[17px] shrink-0 items-center justify-center border border-[#f8f8f8] border-b-[#707070] border-r-[#707070] bg-[#efefef]';

const TOOLS: [string, React.ReactNode][] = [
  ['틀 추가', <><path d="M1 1H11V11H1Z" /><path d="M7 7H15V15H7ZM11 7V15M7 11H15" stroke="#333" /></>],
  ['틀 겹치기', <><path d="M1 1H10V9H1Z" /><path d="M6 6H15V15H6Z" fill="#eee" /></>],
  ['전체 보기', <><path d="M0 2H15M0 14H15" strokeDasharray="1 2" /><path d="M1 11L5 7L8 10L14 4" /></>],
  ['십자선', <><path d="M1 4H15M4 1V15" stroke="#333" /><path d="M6 6L13 13M6 6H11M6 6V11" stroke="#333" /></>],
  ['추세선', <><path d="M1 3H15" stroke="#333" /><path d="M1 13L5 6L9 11L13 5" /></>],
  ['수직선', <><path d="M5 0V15" stroke="#804060" /><path d="M1 12L5 8L9 13L13 6L15 9" /></>],
  ['사선', <><path d="M3 14L14 1" stroke="#804060" /><path d="M1 12L6 7L9 13L14 7" /></>],
  ['지우개', <><path d="M1 9L7 2H13L8 9ZM1 9V13H7L13 6V2" /><path d="M9 14V10M12 14V9M15 14V9" stroke="#333" /></>],
  ['차트 복사', <><path d="M5 1H15V9H5Z" /><path d="M1 6H11V15H1ZM2 12L5 9L7 12L10 8" stroke="#333" fill="#eee" /></>],
  ['돋보기', <><circle cx="6" cy="6" r="5" stroke="#444" /><path d="M10 10L15 15" stroke="#444" strokeWidth="2" /></>],
  ['축소', <path d="M2 8H13" stroke="#444" strokeWidth="2" />],
  ['확대', <path d="M2 8H14M8 2V14" stroke="#444" strokeWidth="2" />],
];

function BottomBar() {
  return (
    <footer className="mb-[3px] flex h-[17px] shrink-0 items-center bg-[#ececec] pl-[3px] pr-[3px]">
      <button type="button" aria-label="왼쪽으로" className={RAISED}>
        <svg width="5" height="8"><path d="M5 0V8L0 4Z" /></svg>
      </button>
      <div className="flex h-4 flex-1 justify-end bg-[#f5f5f5]">
        <div className="h-4 w-[36%] border border-white border-b-2 border-b-[#808080] border-r-[#808080] bg-[#efefef]" />
      </div>
      <button type="button" aria-label="재생" className={RAISED}><svg width="5" height="8"><path d="M0 0V8L5 4Z" /></svg></button>
      <button type="button" aria-label="되감기" className={RAISED}><svg width="9" height="8"><path d="M4 0V8L0 4ZM9 0V8L5 4Z" /></svg></button>
      <button type="button" aria-label="정지" className={RAISED}><svg width="7" height="7"><path d="M0 0H7V7H0Z" /></svg></button>
      <button type="button" aria-label="빨리 감기" className={RAISED}><svg width="9" height="8"><path d="M0 0V8L4 4ZM5 0V8L9 4Z" /></svg></button>
      <div className="ml-1.5 flex w-[70px] flex-col">
        <input
          type="range"
          aria-label="재생 속도"
          defaultValue={36}
          className="h-2.5 w-full appearance-none bg-[linear-gradient(#888,#888)] bg-[length:100%_2px] bg-center bg-no-repeat [&::-webkit-slider-thumb]:h-2.5 [&::-webkit-slider-thumb]:w-1 [&::-webkit-slider-thumb]:appearance-none [&::-webkit-slider-thumb]:border [&::-webkit-slider-thumb]:border-[#777] [&::-webkit-slider-thumb]:bg-[#eee]"
        />
        <div className="flex justify-between px-0.5">
          {Array.from({ length: 11 }, (_, i) => <span key={i} className="h-[3px] w-px bg-[#333]" />)}
        </div>
      </div>
      <div className="ml-1.5 flex items-center">
        {TOOLS.map(([name, art]) => (
          <button
            key={name}
            type="button"
            aria-label={name}
            className={name === '십자선' ? 'flex h-[17px] w-[17px] items-center justify-center bg-white' : 'flex h-[17px] w-[17px] items-center justify-center'}
          >
            <svg width="15" height="15" viewBox="0 0 16 16" fill="none" stroke="#808080">{art}</svg>
          </button>
        ))}
        <button type="button" aria-label="글자 크기" className="w-4 text-center font-['Liberation_Sans'] text-[15px] font-bold leading-4 text-[#444]">A</button>
      </div>
    </footer>
  );
}

export default function App() {
  return (
    <div className="flex h-screen w-full flex-col overflow-hidden bg-black pt-px font-['Noto_Sans_CJK_KR',sans-serif] text-[13px] leading-4 text-black">
      <TitleBar />
      <main className="mx-[3px] flex min-h-0 flex-1 flex-col bg-[#d0d0d0]">
        <Toolbar />
        <QuoteBar />
        <div className="mx-[3px] min-h-0 flex-1"><Chart /></div>
        <BottomBar />
      </main>
      <div className="h-[3px] shrink-0" />
    </div>
  );
}
